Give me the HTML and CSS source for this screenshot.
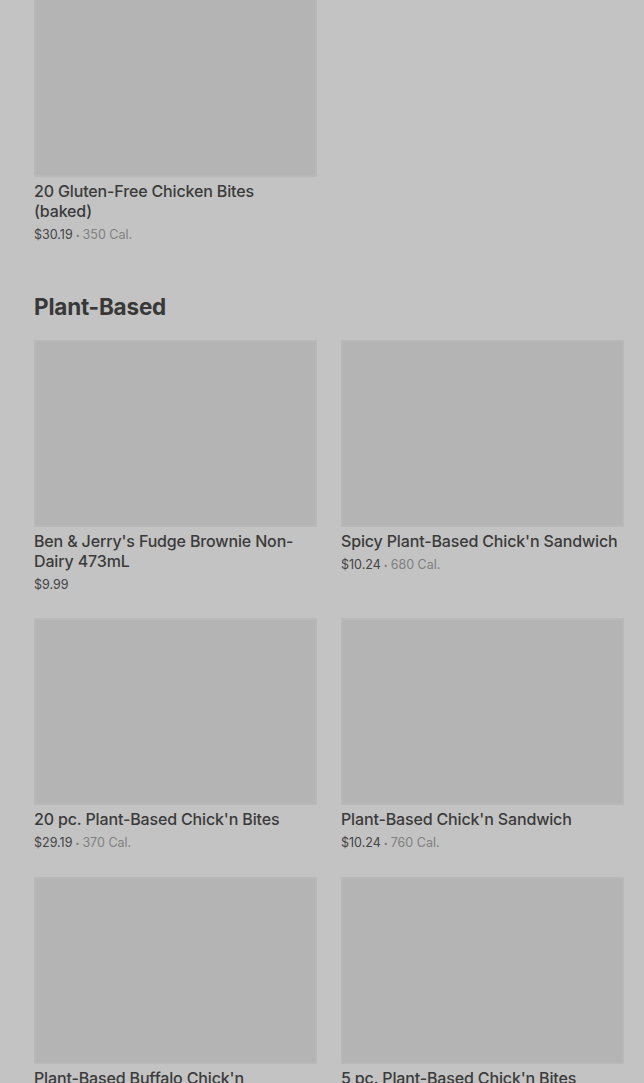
FILE: index.html
```html
<!DOCTYPE html>
<html>
<head>
  <meta charset="utf-8">
  <title>Menu</title>
  <link rel="stylesheet" href="styles.css">
</head>
<body>
  <div class="menu">
    <section class="section">
      <div class="grid">
        <div class="item">
          <div class="photo"></div>
          <div class="name">20 Gluten-Free Chicken Bites (baked)</div>
          <div class="meta">$30.19<span class="dot">•</span><span class="cal">350 Cal.</span></div>
        </div>
      </div>
    </section>

    <section class="section">
      <h2 class="heading">Plant-Based</h2>
      <div class="grid">
        <div class="item">
          <div class="photo"></div>
          <div class="name">Ben &amp; Jerry's Fudge Brownie Non-Dairy 473mL</div>
          <div class="meta">$9.99</div>
        </div>
        <div class="item">
          <div class="photo"></div>
          <div class="name">Spicy Plant-Based Chick'n Sandwich</div>
          <div class="meta">$10.24<span class="dot">•</span><span class="cal">680 Cal.</span></div>
        </div>
        <div class="item">
          <div class="photo"></div>
          <div class="name">20 pc. Plant-Based Chick'n Bites</div>
          <div class="meta">$29.19<span class="dot">•</span><span class="cal">370 Cal.</span></div>
        </div>
        <div class="item">
          <div class="photo"></div>
          <div class="name">Plant-Based Chick'n Sandwich</div>
          <div class="meta">$10.24<span class="dot">•</span><span class="cal">760 Cal.</span></div>
        </div>
        <div class="item">
          <div class="photo"></div>
          <div class="name">Plant-Based Buffalo Chick'n Sandwich</div>
          <div class="meta">$10.24<span class="dot">•</span><span class="cal">690 Cal.</span></div>
        </div>
        <div class="item">
          <div class="photo"></div>
          <div class="name">5 pc. Plant-Based Chick'n Bites</div>
          <div class="meta">$10.69<span class="dot">•</span><span class="cal">90 Cal.</span></div>
        </div>
      </div>
    </section>
  </div>
</body>
</html>
```

FILE: styles.css
```css
html,
body,
div,
h2,
section {
  margin: 0;
  padding: 0;
}

html {
  height: 100%;
}

body {
  font-family: 'Inter', 'Liberation Sans', sans-serif;
  background: #c3c3c3;
  color: #3b3b3b;
  overflow: hidden;
  -webkit-font-smoothing: antialiased;
}

.menu {
  margin-top: -10px;
  padding: 0 20px 0 34px;
}

.section + .section {
  margin-top: 48px;
}

.heading {
  font-size: 22.5px;
  line-height: 28px;
  font-weight: 700;
  letter-spacing: -0.2px;
  color: #383838;
  margin-bottom: 19px;
}

.grid {
  display: grid;
  grid-template-columns: 283px 283px;
  column-gap: 24px;
  row-gap: 24px;
}

.photo {
  height: 187px;
  background: #b4b4b4;
  border-radius: 2px;
  box-shadow: inset 0 0 0 2px #b8b8b8;
}

.name {
  margin-top: 4px;
  padding-right: 4px;
  font-size: 16px;
  line-height: 20px;
  font-weight: 500;
  letter-spacing: -0.15px;
}

.meta {
  margin-top: 3px;
  padding-top: 1px;
  font-size: 12.5px;
  line-height: 19px;
  color: #444;
}

.dot {
  font-size: 7px;
  color: #7d7d7d;
  margin: 0 3px;
  vertical-align: 1px;
}

.cal {
  color: #808080;
}
```
